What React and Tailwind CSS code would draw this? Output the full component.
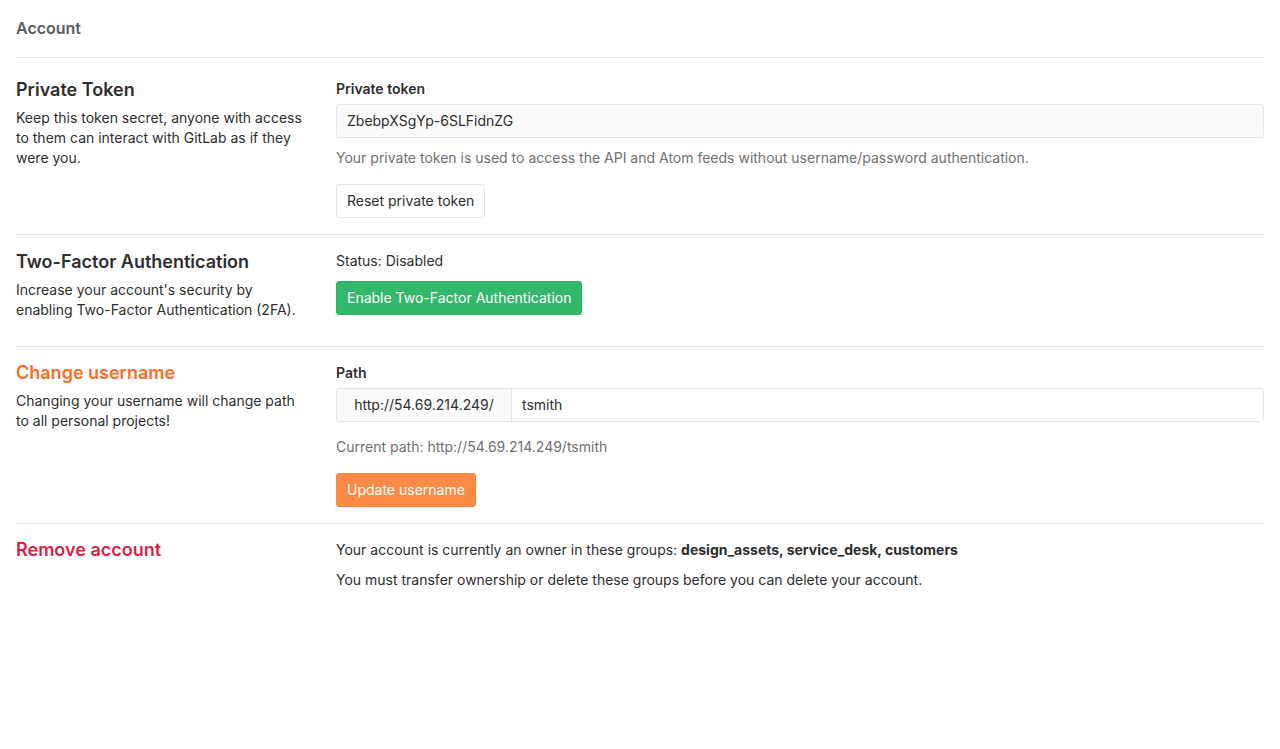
export default function App() {
    const font = { fontFamily: 'Inter, "Liberation Sans", Arial, sans-serif' };

    return (
        <div className="min-h-[749px] bg-white px-4 text-[14px] leading-5 text-[#2e2e2e]" style={font}>
            <div className="flex h-[58px] items-center border-b border-[#e5e5e5]">
                <h3 className="-mt-[1px] text-[16px] font-semibold text-[#5c5c5c]">Account</h3>
            </div>

            {/* Private token */}
            <div className="flex gap-[30px] pt-[21px] pb-4">
                <div className="w-[290px] shrink-0">
                    <h4 className="mb-[7px] text-[18px] leading-[22px] font-semibold text-[#2e2e2e]">Private Token</h4>
                    <p>Keep this token secret, anyone with access to them can interact with GitLab as if they were you.</p>
                </div>
                <div className="flex-1">
                    <label className="mb-[5px] block font-semibold">Private token</label>
                    <div className="flex h-[34px] items-center rounded-[3px] border border-[#e5e5e5] bg-[#fafafa] px-[10px] text-[#2e2e2e]">
                        ZbebpXSgYp-6SLFidnZG
                    </div>
                    <p className="mt-[10px] text-[#707070]">Your private token is used to access the API and Atom feeds without username/password authentication.</p>
                    <button className="mt-4 h-[34px] rounded-[3px] border border-[#e5e5e5] bg-white px-[10px] text-[#2e2e2e]">Reset private token</button>
                </div>
            </div>

            {/* Two-factor */}
            <div className="flex gap-[30px] border-t border-[#e5e5e5] pt-4 pb-[26px]">
                <div className="w-[290px] shrink-0">
                    <h4 className="mb-[7px] text-[18px] leading-[22px] font-semibold">Two-Factor Authentication</h4>
                    <p>Increase your account's security by enabling Two-Factor Authentication (2FA).</p>
                </div>
                <div className="flex-1">
                    <p>Status: Disabled</p>
                    <button className="mt-[10px] h-[34px] rounded-[3px] border border-[#2eb366] bg-[#33b86b] px-[10px] text-white">Enable Two-Factor Authentication</button>
                </div>
            </div>

            {/* Change username */}
            <div className="flex gap-[30px] border-t border-[#e5e5e5] pt-4 pb-4">
                <div className="w-[290px] shrink-0">
                    <h4 className="-mt-px mb-[7px] text-[18px] leading-[22px] font-semibold text-[#fc6d26]">Change username</h4>
                    <p>Changing your username will change path to all personal projects!</p>
                </div>
                <div className="flex-1">
                    <label className="mb-[5px] block font-semibold">Path</label>
                    <div className="flex h-[34px] rounded-[3px] border border-[#e5e5e5]">
                        <div className="flex w-[175px] items-center justify-center border-r border-[#e5e5e5] bg-[#fafafa] text-[#2e2e2e]">http://54.69.214.249/</div>
                        <div className="flex flex-1 items-center px-[10px] text-[#2e2e2e]">tsmith</div>
                    </div>
                    <p className="mt-[15px] text-[#707070]">Current path: http://54.69.214.249/tsmith</p>
                    <button className="mt-4 h-[34px] rounded-[3px] border border-[#fb8441] bg-[#fc8a47] px-[10px] text-white">Update username</button>
                </div>
            </div>

            {/* Remove account */}
            <div className="flex gap-[30px] border-t border-[#e5e5e5] pt-4 pb-4">
                <div className="w-[290px] shrink-0">
                    <h4 className="-mt-px text-[18px] leading-[22px] font-semibold text-[#db1f45]">Remove account</h4>
                </div>
                <div className="flex-1">
                    <p>Your account is currently an owner in these groups: <strong className="font-bold">design_assets, service_desk, customers</strong></p>
                    <p className="mt-[10px]">You must transfer ownership or delete these groups before you can delete your account.</p>
                </div>
            </div>
        </div>
    );
}
